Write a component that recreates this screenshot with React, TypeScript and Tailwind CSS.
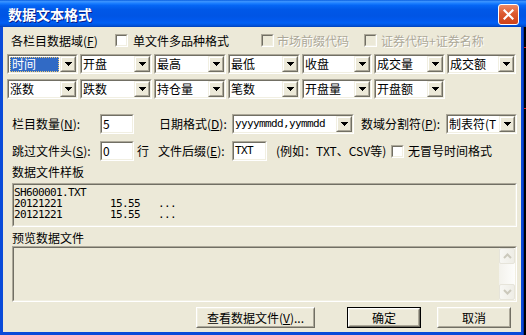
import React from "react";

const MONO = "font-['DejaVu_Sans_Mono',monospace] text-[11px] tracking-[-0.62px]";

function Sunken({
  className = "",
  inner = "bg-white",
  children,
}: {
  className?: string;
  inner?: string;
  children?: React.ReactNode;
}) {
  return (
    <div className={"border border-t-[#ACA899] border-l-[#ACA899] border-b-white border-r-white " + className}>
      <div className={"w-full h-full border border-t-[#716F64] border-l-[#716F64] border-b-[#F1EFE2] border-r-[#F1EFE2] " + inner}>
        {children}
      </div>
    </div>
  );
}

function DropBtn() {
  return (
    <div className="w-[16px] h-full border border-t-[#F1EFE2] border-l-[#F1EFE2] border-b-[#716F64] border-r-[#716F64]">
      <div className="w-full h-full border border-t-white border-l-white border-b-[#ACA899] border-r-[#ACA899] bg-[#ECE9D8] flex items-center justify-center">
        <svg width="7" height="4" viewBox="0 0 7 4" shapeRendering="crispEdges">
          <path d="M0 0h7v1h-1v1h-1v1h-1v1h-1v-1h-1v-1h-1v-1h-1z" fill="#000" />
        </svg>
      </div>
    </div>
  );
}

function Combo({
  className,
  text,
  selected = false,
  mono = false,
}: {
  className: string;
  text: string;
  selected?: boolean;
  mono?: boolean;
}) {
  return (
    <Sunken className={"h-[20px] shrink-0 " + className}>
      <div className="flex h-full">
        <div className="flex-1 min-w-0 flex items-center overflow-hidden">
          {selected ? (
            <div className="ml-[1px] h-[15px] w-[49px] bg-[#316AC5] text-white border border-dotted border-[#E9C877] flex items-center pl-[1px] leading-[12px]">
              {text}
            </div>
          ) : (
            <span className={"pl-[1px] whitespace-nowrap leading-[12px] " + (mono ? MONO : "")}>{text}</span>
          )}
        </div>
        <DropBtn />
      </div>
    </Sunken>
  );
}

function Input({ className, children }: { className: string; children?: React.ReactNode }) {
  return (
    <Sunken className={"h-[20px] shrink-0 " + className}>
      <div className="h-full flex items-center pl-[1px] leading-[12px]">{children}</div>
    </Sunken>
  );
}

function Check({ disabled = false }: { disabled?: boolean }) {
  return (
    <Sunken className="w-[13px] h-[13px] shrink-0" inner={disabled ? "bg-[#ECE9D8]" : "bg-white"} />
  );
}

function Btn({
  className,
  def = false,
  children,
}: {
  className: string;
  def?: boolean;
  children: React.ReactNode;
}) {
  const body = (
    <div className="w-full h-full border border-t-white border-l-white border-b-[#716F64] border-r-[#716F64]">
      <div className="w-full h-full border border-t-[#F1EFE2] border-l-[#F1EFE2] border-b-[#ACA899] border-r-[#ACA899] flex items-center justify-center leading-[12px] whitespace-nowrap">
        {children}
      </div>
    </div>
  );
  return def ? (
    <div className={"h-full border border-black " + className}>{body}</div>
  ) : (
    <div className={"h-full " + className}>{body}</div>
  );
}

function ScrollBtn({ up }: { up: boolean }) {
  return (
    <div className="h-[16px] w-full rounded-[2px] border border-[#E6E4DA] bg-[linear-gradient(to_right,#F7F7F3,#EEEDE6)] flex items-center justify-center">
      <svg width="9" height="6" viewBox="0 0 9 6">
        <path
          d={up ? "M1 5L4.5 1.5L8 5" : "M1 1L4.5 4.5L8 1"}
          fill="none"
          stroke="#CBC9BC"
          strokeWidth="2"
        />
      </svg>
    </div>
  );
}

function U({ c }: { c: string }) {
  return (
    <>
      (<span className="underline underline-offset-[1px]">{c}</span>)
    </>
  );
}

const DIS = "text-[#ACA899] [text-shadow:1px_1px_0_#fff]";

export default function App() {
  const row1 = [
    ["w-[71px]", "时间"],
    ["w-[72px]", "开盘"],
    ["w-[72px]", "最高"],
    ["w-[72px]", "最低"],
    ["w-[70px]", "收盘"],
    ["w-[71px]", "成交量"],
    ["w-[69px]", "成交额"],
  ];
  const row2 = [
    ["w-[71px]", "涨数"],
    ["w-[72px]", "跌数"],
    ["w-[72px]", "持仓量"],
    ["w-[72px]", "笔数"],
    ["w-[70px]", "开盘量"],
    ["w-[71px]", "开盘额"],
  ];
  return (
    <div className="w-[526px] h-[335px] overflow-hidden bg-black flex flex-col font-['Noto_Sans_CJK_SC',sans-serif] text-[12px] text-black">
      {/* title bar */}
      <div className="h-[27px] shrink-0 flex items-center bg-[linear-gradient(to_bottom,#0A5FE0_0%,#3D95FF_6%,#1C7FFF_12%,#0566F5_20%,#0058E8_35%,#0055E5_60%,#0059EE_75%,#0060F5_85%,#0052DC_94%,#0041B8_100%)]">
        <span className="ml-[8px] text-white font-bold text-[14px] leading-none [text-shadow:1px_1px_0_#0A1E8A]">
          数据文本格式
        </span>
        <div className="ml-auto mr-[7px] self-start mt-[4px] w-[21px] h-[21px] rounded-[3px] border border-white bg-[linear-gradient(to_bottom,#EE8A66,#DC5A30_45%,#CE4218)] flex items-center justify-center">
          <svg width="11" height="11" viewBox="0 0 11 11">
            <path d="M1.5 1.5L9.5 9.5M9.5 1.5L1.5 9.5" stroke="#fff" strokeWidth="2.2" strokeLinecap="square" />
          </svg>
        </div>
      </div>

      <div className="flex">
        <div className="w-[524px] h-[308px] bg-[#0A4BD9] pl-[3px] border-r border-r-[#0831A8]">
          <div className="w-[518px] h-[305px] bg-[#ECE9D8] flex flex-col">
            {/* row 1 */}
            <div className="mt-[7px] h-[13px] flex items-center pl-[8px] leading-[12px] whitespace-nowrap">
              <span className="w-[104px] shrink-0">
                各栏目数据域<U c="F" />
              </span>
              <Check />
              <span className="ml-[5px] w-[128px] shrink-0">单文件多品种格式</span>
              <Check disabled />
              <span className={"ml-[3px] w-[87px] shrink-0 " + DIS}>市场前缀代码</span>
              <Check disabled />
              <span className={"ml-[4px] shrink-0 " + DIS}>证券代码+证券名称</span>
            </div>

            {/* combo rows */}
            <div className="mt-[7px] flex gap-[2px] pl-[4px]">
              {row1.map(([w, t], i) => (
                <Combo key={i} className={w} text={t} selected={i === 0} />
              ))}
            </div>
            <div className="mt-[5px] flex gap-[2px] pl-[4px]">
              {row2.map(([w, t], i) => (
                <Combo key={i} className={w} text={t} />
              ))}
            </div>

            {/* row 3 */}
            <div className="mt-[15px] h-[20px] flex items-center pl-[9px] leading-[12px] whitespace-nowrap">
              <span className="w-[88px] shrink-0">
                栏目数量<U c="N" />:
              </span>
              <Input className="w-[34px]">5</Input>
              <span className="ml-[25px] w-[73px] shrink-0">
                日期格式<U c="D" />:
              </span>
              <Combo className="w-[122px]" text="yyyymmdd,yymmdd" mono />
              <span className="ml-[7px] w-[85px] shrink-0">
                数域分割符<U c="P" />:
              </span>
              <Combo className="w-[71px]" text="制表符(T" />
            </div>

            {/* row 4 */}
            <div className="mt-[7px] h-[20px] flex items-center pl-[9px] leading-[12px] whitespace-nowrap">
              <span className="w-[88px] shrink-0">
                跳过文件头<U c="S" />:
              </span>
              <Input className="w-[34px]">0</Input>
              <span className="ml-[3px] w-[12px] shrink-0">行</span>
              <span className="ml-[9px] w-[74px] shrink-0">
                文件后缀<U c="E" />:
              </span>
              <Input className="w-[35px]">
                <span className={MONO}>TXT</span>
              </Input>
              <span className="ml-[9px] w-[115px] shrink-0">(例如：TXT、CSV等)</span>
              <Check />
              <span className="ml-[4px] shrink-0">无冒号时间格式</span>
            </div>

            {/* sample */}
            <div className="mt-[5px] h-[12px] pl-[9px] leading-[12px]">数据文件样板</div>
            <Sunken className="mt-[5px] ml-[9px] w-[505px] h-[44px]" inner="bg-[#ECE9D8]">
              <div className={"pt-[2px] pl-[0px] leading-[11px] whitespace-pre " + MONO}>
                {"SH600001.TXT\n20121221        15.55   ...\n20121221        15.55   ..."}
              </div>
            </Sunken>

            {/* preview */}
            <div className="mt-[5px] h-[12px] pl-[9px] leading-[12px]">预览数据文件</div>
            <Sunken className="mt-[2px] ml-[9px] w-[505px] h-[56px]" inner="bg-[#ECE9D8]">
              <div className="h-full flex">
                <div className="flex-1" />
                <div className="w-[16px] h-full flex flex-col bg-[linear-gradient(to_right,#F3F2EC,#FDFDFB)]">
                  <ScrollBtn up />
                  <div className="flex-1" />
                  <ScrollBtn up={false} />
                </div>
              </div>
            </Sunken>

            {/* buttons */}
            <div className="mt-[5px] h-[21px] flex justify-end pr-[10px]">
              <Btn className="w-[119px]">
                查看数据文件<U c="V" />...
              </Btn>
              <Btn className="w-[74px] ml-[32px]" def>
                确定
              </Btn>
              <Btn className="w-[74px] ml-[16px]">取消</Btn>
            </div>
          </div>
        </div>
        <div className="w-[2px] h-[308px] bg-black flex flex-col">
          <div className="h-[20px]" />
          <div className="h-[1px] bg-[#E02020]" />
          <div className="h-[60px]" />
          <div className="h-[1px] bg-[#E02020]" />
        </div>
      </div>
    </div>
  );
}
